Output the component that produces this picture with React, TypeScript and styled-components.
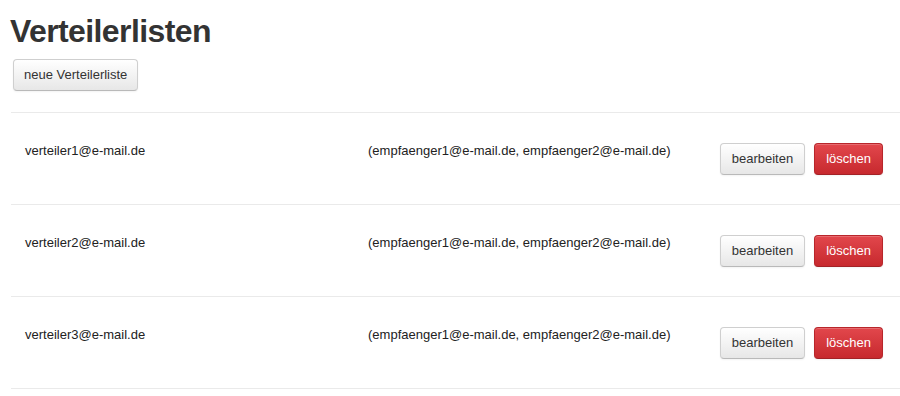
import React from "react";
import styled, { createGlobalStyle } from "styled-components";

const GlobalStyle = createGlobalStyle`
  html, body {
    margin: 0;
    padding: 0;
    background: #fff;
    font-family: "Liberation Sans", Arial, sans-serif;
    color: #333;
  }
`;

const Page = styled.div`
  width: 900px;
  padding: 11px 0 0 10px;
  box-sizing: border-box;
`;

const Title = styled.h1`
  margin: 0;
  font-size: 32px;
  line-height: 40px;
  font-weight: bold;
  letter-spacing: -0.6px;
  color: #333;
`;

const Button = styled.button<{ danger?: boolean }>`
  height: 32px;
  padding: 0 11px;
  font-family: "Liberation Sans", Arial, sans-serif;
  font-size: 13px;
  line-height: 30px;
  border-radius: 4px;
  cursor: pointer;
  color: ${p => (p.danger ? "#fff" : "#333")};
  background: ${p =>
    p.danger
      ? "linear-gradient(#e2474c, #c7292e)"
      : "linear-gradient(#ffffff, #e7e7e7)"};
  border: 1px solid ${p => (p.danger ? "#b8262b" : "#cfcfcf")};
  border-bottom-color: ${p => (p.danger ? "#a32226" : "#b9b9b9")};
  box-shadow: inset 0 1px 0 rgba(255, 255, 255, 0.2),
    0 1px 2px rgba(0, 0, 0, 0.05);
`;

const NewButton = styled(Button)`
  margin: 8px 0 0 3px;
  padding: 0 10px;
`;

const List = styled.div`
  margin: 21px 0 0 1px;
  border-bottom: 1px solid #eaeaea;
`;

const Row = styled.div`
  display: grid;
  grid-template-columns: 343px 1fr auto;
  height: 91px;
  padding-left: 14px;
  border-top: 1px solid #eaeaea;
`;

const Cell = styled.div`
  padding-top: 28px;
  font-size: 13px;
  line-height: 20px;
  color: #222;
`;

const Actions = styled.div`
  display: flex;
  align-items: flex-start;
  gap: 9px;
  padding: 30px 17px 0 0;
`;

const lists = [
  { name: "verteiler1@e-mail.de", members: ["empfaenger1@e-mail.de", "empfaenger2@e-mail.de"] },
  { name: "verteiler2@e-mail.de", members: ["empfaenger1@e-mail.de", "empfaenger2@e-mail.de"] },
  { name: "verteiler3@e-mail.de", members: ["empfaenger1@e-mail.de", "empfaenger2@e-mail.de"] }
];

const App: React.FunctionComponent = () => (
  <>
    <GlobalStyle />
    <Page>
      <Title>Verteilerlisten</Title>
      <NewButton>neue Verteilerliste</NewButton>
      <List>
        {lists.map(list => (
          <Row key={list.name}>
            <Cell>{list.name}</Cell>
            <Cell>({list.members.join(", ")})</Cell>
            <Actions>
              <Button>bearbeiten</Button>
              <Button danger>löschen</Button>
            </Actions>
          </Row>
        ))}
      </List>
    </Page>
  </>
);

export default App;
